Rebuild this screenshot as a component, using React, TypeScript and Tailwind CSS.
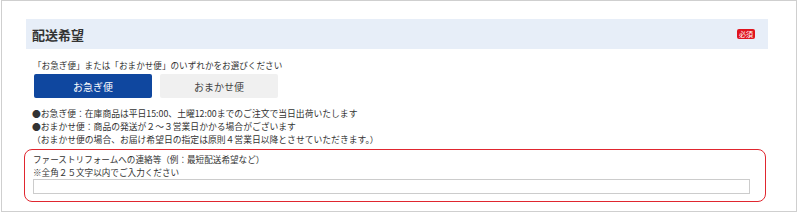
export default function App() {
  return (
    <div className="h-[213px] w-[800px] bg-white font-['Noto_Sans_CJK_JP','Noto_Sans',sans-serif] text-[#333]">
      <div className="ml-[1px] h-[212px] w-[796px] border border-[#cfcfcf] pt-[18px] pl-[24px]">
        <div className="flex h-[30px] w-[742px] items-center justify-between bg-[#e7eef8] pr-[13px] pl-[6px]">
          <div className="text-[13px] leading-none font-bold">配送希望</div>
          <span className="rounded-[2px] bg-[#e0141e] px-[2px] text-[7px] leading-[10px] text-white">必須</span>
        </div>

        <div className="mt-[10px] pl-[7px] text-[8.6px] leading-[12px]">
          「お急ぎ便」または「おまかせ便」のいずれかをお選びください
        </div>
        <div className="mt-[3px] flex gap-[8px] pl-[8px]">
          <button className="h-[24px] w-[118px] rounded-[2px] bg-[#0f479f] text-[10px] text-white">お急ぎ便</button>
          <button className="h-[24px] w-[118px] rounded-[2px] bg-[#f0f0f0] text-[10px] text-[#444]">おまかせ便</button>
        </div>

        <div className="mt-[9px] pl-[6px] text-[8.8px] leading-[13px]">
          <div>●お急ぎ便：在庫商品は平日15:00、土曜12:00までのご注文で当日出荷いたします</div>
          <div>●おまかせ便：商品の発送が２～３営業日かかる場合がございます</div>
          <div>（おまかせ便の場合、お届け希望日の指定は原則４営業日以降とさせていただきます。）</div>
        </div>

        <div className="mt-[3px] -ml-[2px] w-[742px] rounded-[8px] border-[1.5px] border-[#e0262f] px-[8px] pt-[3px] pb-[7px]">
          <div className="text-[8.6px] leading-[13px]">ファーストリフォームへの連絡等（例：最短配送希望など）</div>
          <div className="text-[8.6px] leading-[13px]">※全角２５文字以内でご入力ください</div>
          <input type="text" className="block h-[15px] w-[717px] border border-[#cccccc] bg-white" />
        </div>
      </div>
    </div>
  );
}
